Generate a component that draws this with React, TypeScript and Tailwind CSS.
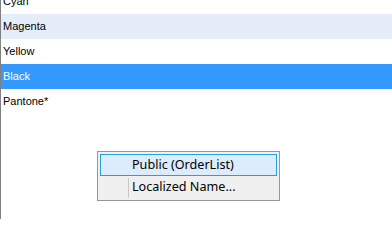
const rows = [
  { name: "Cyan", tone: "plain" },
  { name: "Magenta", tone: "alt" },
  { name: "Yellow", tone: "plain" },
  { name: "Black", tone: "selected" },
  { name: "Pantone*", tone: "plain" },
];

function ColorRow({ name, tone }: { name: string; tone: string }) {
  const bg =
    tone === "selected"
      ? "bg-[#3399ff] text-white"
      : tone === "alt"
        ? "bg-[#e5eef8] text-black"
        : "bg-white text-black";
  return (
    <div className={`h-[25px] flex items-center pl-[2px] text-[11px] ${bg}`}>
      {name}
    </div>
  );
}

function ContextMenu() {
  return (
    <div className="absolute left-[97px] top-[151px] w-[183px] h-[50px] bg-[#f0f0f0] border border-[#979797] p-[2px] font-['Noto_Sans',sans-serif] text-[12.6px] text-black">
      <div className="h-[22px] flex items-center pl-[31px] bg-[#dcecfc] border border-[#26a0da]">
        Public (OrderList)
      </div>
      <div className="h-[22px] flex items-center relative pl-[32px]">
        <span className="absolute left-[28px] top-[2px] bottom-0 w-px bg-[#c8c8c8]" />
        Localized Name...
      </div>
    </div>
  );
}

export default function App() {
  return (
    <div className="relative w-[392px] h-[219px] bg-white overflow-hidden font-['Liberation_Sans',sans-serif]">
      <div className="h-[240px] border-l border-[#808080] mt-[-11px]">
        {rows.map((r) => (
          <ColorRow key={r.name} name={r.name} tone={r.tone} />
        ))}
      </div>
      <ContextMenu />
    </div>
  );
}
